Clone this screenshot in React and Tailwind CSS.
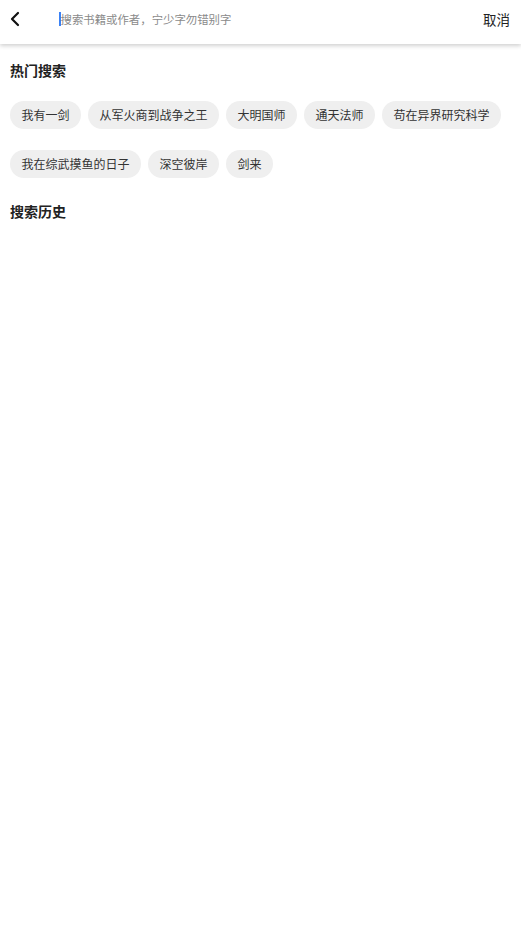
import { ChevronLeft } from "lucide-react";

const hotWords = [
  "我有一剑",
  "从军火商到战争之王",
  "大明国师",
  "通天法师",
  "苟在异界研究科学",
  "我在综武摸鱼的日子",
  "深空彼岸",
  "剑来",
];

export default function App() {
  return (
    <div
      className="min-h-[930px] bg-white text-[#222]"
      style={{ fontFamily: '"Noto Sans CJK SC", "Noto Sans", sans-serif' }}
    >
      <header className="flex h-[44px] items-center bg-white pb-[6px] shadow-[0_2px_4px_rgba(0,0,0,0.18)]">
        <button className="flex h-[30px] w-[30px] items-center justify-center">
          <ChevronLeft size={24} strokeWidth={2.2} className="text-[#111]" />
        </button>
        <div className="ml-[29px] flex flex-1 items-center">
          <span className="h-[14px] w-[1.5px] bg-[#3b82f6]" />
          <span className="text-[11.4px] leading-[16px] text-[#8a8a8a]">
            搜索书籍或作者，宁少字勿错别字
          </span>
        </div>
        <button className="mr-[11px] text-[13.5px] leading-[18px] text-[#222]">
          取消
        </button>
      </header>

      <section className="px-[10px] pt-[14px]">
        <h2 className="text-[14px] font-bold leading-[24px]">热门搜索</h2>
        <div className="mt-[19px] flex flex-wrap gap-x-[7px] gap-y-[21px]">
          {hotWords.map((word) => (
            <span
              key={word}
              className="flex h-[28px] items-center rounded-full bg-[#efefef] px-[11.5px] text-[12px] text-[#333]"
            >
              {word}
            </span>
          ))}
        </div>
        <h2 className="mt-[21px] text-[14px] font-bold leading-[24px]">
          搜索历史
        </h2>
      </section>
    </div>
  );
}
